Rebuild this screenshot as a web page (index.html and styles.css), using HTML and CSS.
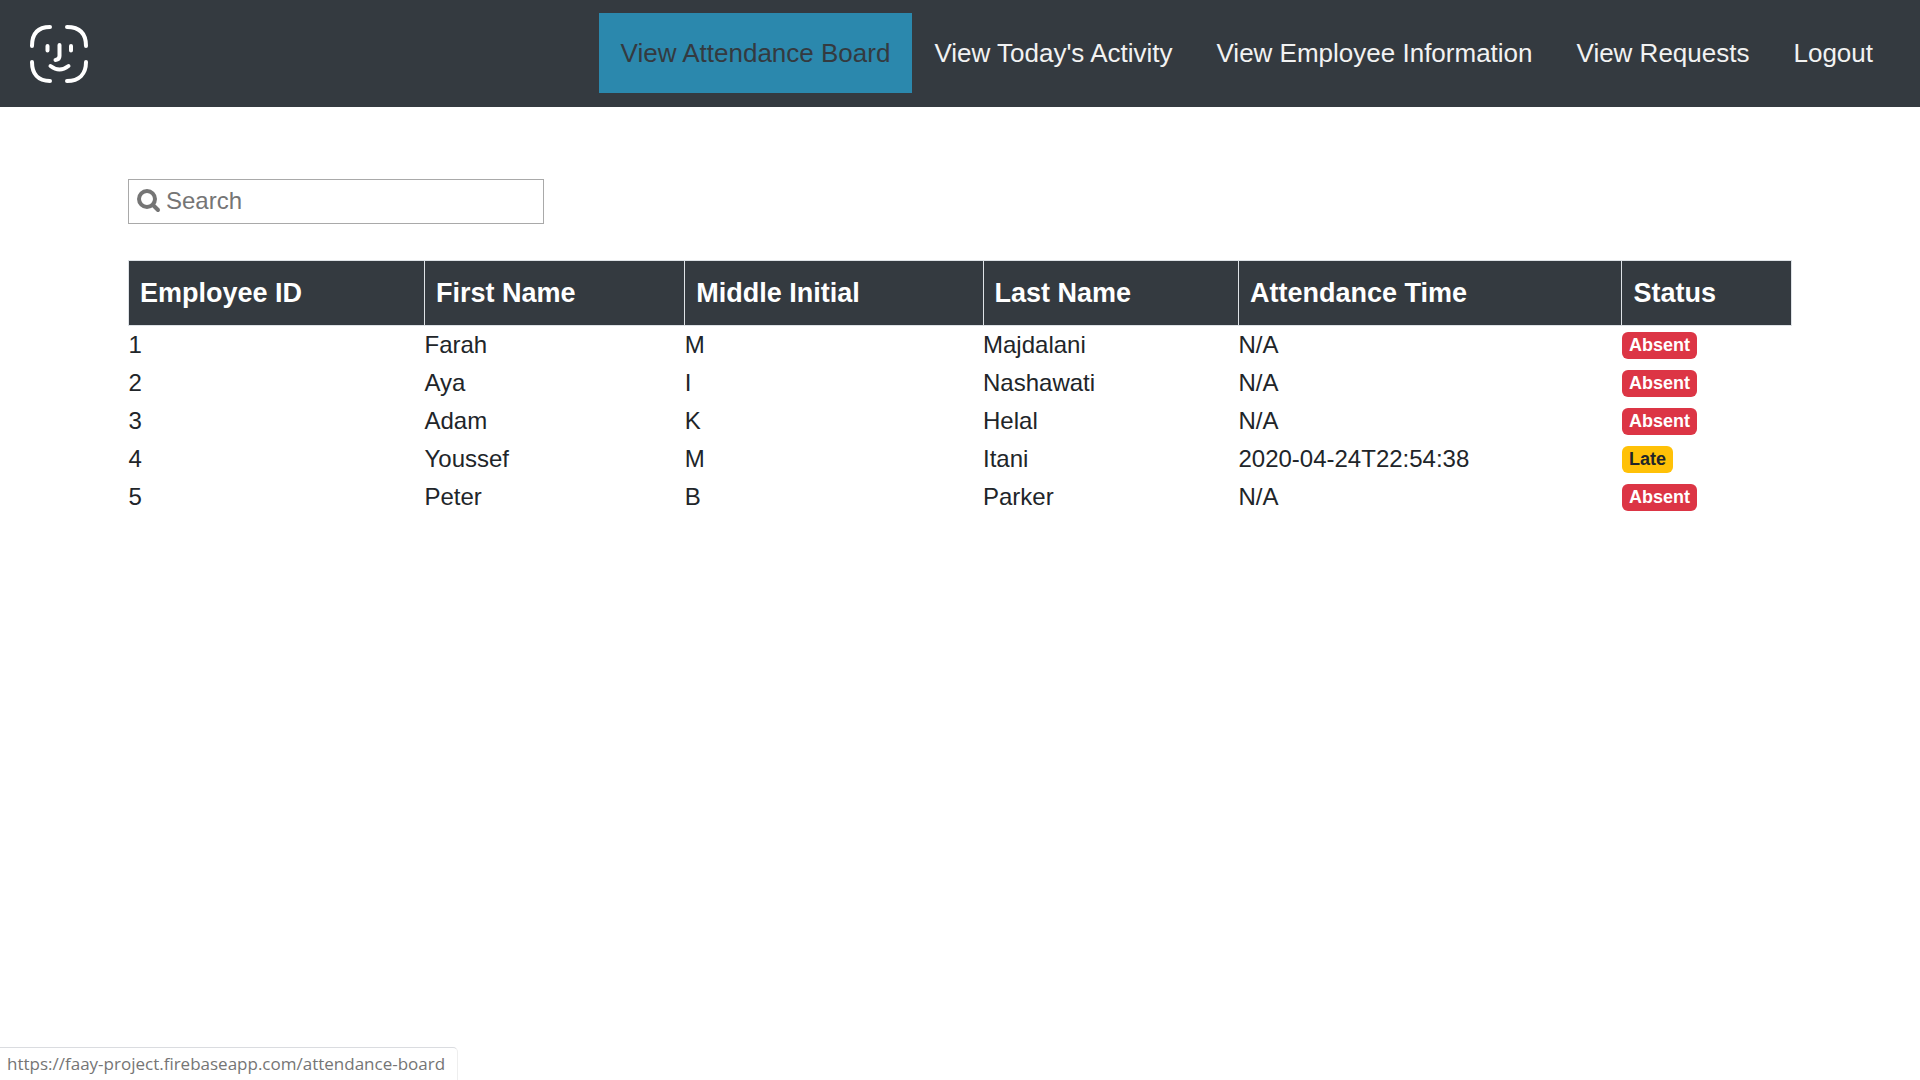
FILE: index.html
```html
<!DOCTYPE html>
<html lang="en">
<head>
<meta charset="utf-8">
<meta name="viewport" content="width=device-width, initial-scale=1">
<title>Attendance Board</title>
<link rel="stylesheet" href="styles.css">
</head>
<body>
<header class="navbar">
  <a class="brand" href="#" aria-label="Home">
    <svg class="brand-icon" viewBox="0 0 60 60" aria-hidden="true">
      <path d="M3 23C3 10 9 4 21 4M38 4C50 4 57 10 57 23M57 39C57 51 50 58 38 58M21 58C9 58 3 51 3 39"/>
      <path d="M18.500 23V27.500M42 23V27.500M30.500 22V33Q30.500 36.500 26.500 37M21.500 43Q30.500 50 39.500 43"/>
    </svg>
  </a>
  <nav class="nav">
    <a class="nav-link active" href="#">View Attendance Board</a>
    <a class="nav-link" href="#">View Today's Activity</a>
    <a class="nav-link" href="#">View Employee Information</a>
    <a class="nav-link" href="#">View Requests</a>
    <a class="nav-link" href="#">Logout</a>
  </nav>
</header>
<main class="content">
  <label class="search">
    <svg class="search-icon" viewBox="0 0 24 24" aria-hidden="true"><circle cx="10" cy="10" r="8"/><path d="M16 16L21 21"/></svg>
    <input class="search-input" type="text" placeholder="Search" aria-label="Search">
  </label>
  <table class="board">
    <thead>
      <tr><th>Employee ID</th><th>First Name</th><th>Middle Initial</th><th>Last Name</th><th>Attendance Time</th><th>Status</th></tr>
    </thead>
    <tbody>
      <tr><td>1</td><td>Farah</td><td>M</td><td>Majdalani</td><td>N/A</td><td><span class="badge absent">Absent</span></td></tr>
      <tr><td>2</td><td>Aya</td><td>I</td><td>Nashawati</td><td>N/A</td><td><span class="badge absent">Absent</span></td></tr>
      <tr><td>3</td><td>Adam</td><td>K</td><td>Helal</td><td>N/A</td><td><span class="badge absent">Absent</span></td></tr>
      <tr><td>4</td><td>Youssef</td><td>M</td><td>Itani</td><td>2020-04-24T22:54:38</td><td><span class="badge late">Late</span></td></tr>
      <tr><td>5</td><td>Peter</td><td>B</td><td>Parker</td><td>N/A</td><td><span class="badge absent">Absent</span></td></tr>
    </tbody>
  </table>
</main>
<div class="link-status">https://faay-project.firebaseapp.com/attendance-board</div>
</body>
</html>
```
FILE: styles.css
```css
* {
  box-sizing: border-box;
}

body {
  margin: 0;
  background: #fff;
  color: #212529;
  font-family: "Liberation Sans", Arial, sans-serif;
  font-size: 24px;
  line-height: 36px;
}

.navbar {
  display: flex;
  align-items: center;
  justify-content: space-between;
  padding: 13px 25px 14px 29px;
  background: #343a40;
}

.brand {
  display: flex;
}

.brand-icon {
  width: 60px;
  height: 60px;
  fill: none;
  stroke: #fff;
  stroke-width: 4;
  stroke-linecap: round;
}

.nav {
  display: flex;
}

.nav-link {
  padding: 20px 22px;
  color: #f2f2f2;
  font-size: 26px;
  line-height: 40px;
  text-decoration: none;
  white-space: nowrap;
}

.nav-link.active {
  background: #2b88ad;
  color: #343a40;
}

.content {
  padding: 72px 128px;
}

.search {
  display: flex;
  align-items: center;
  gap: 5px;
  width: 25%;
  height: 45px;
  padding: 0 8px 1px;
  border: 1px solid #a9a9a9;
  color: #757575;
}

.search-icon {
  flex: none;
  width: 24px;
  height: 24px;
  fill: none;
  stroke: currentColor;
  stroke-width: 4;
  stroke-linecap: round;
}

.search-input {
  flex: 1;
  min-width: 0;
  padding: 0;
  border: 0;
  outline: 0;
  background: none;
  color: #212529;
  font: inherit;
}

.search-input::placeholder {
  color: #757575;
}

.board {
  width: 100%;
  margin-top: 36px;
  border-collapse: collapse;
}

.board th {
  padding: 12px 12px 12px 11px;
  border: 1px solid #dee2e6;
  background: #343a40;
  color: #fff;
  font-size: 27px;
  line-height: 40px;
  text-align: left;
}

.board td {
  padding: 1px 0;
}

.badge {
  display: inline-block;
  margin: 5px 0 4px;
  padding: 4px 7px;
  border-radius: 6px;
  font-size: 18px;
  font-weight: 700;
  line-height: 19px;
  vertical-align: top;
}

.absent {
  background: #dc3545;
  color: #fff;
}

.late {
  background: #ffc107;
}

.link-status {
  position: fixed;
  bottom: 0;
  left: 0;
  padding: 4px 12px 4px 7px;
  border-top: 1px solid #dadce0;
  border-right: 1px solid #eee;
  border-radius: 0 5px 0 0;
  background: #fff;
  color: #757575;
  font-family: "Open Sans", "Noto Sans", sans-serif;
  font-size: 17px;
  line-height: 24px;
}
```
